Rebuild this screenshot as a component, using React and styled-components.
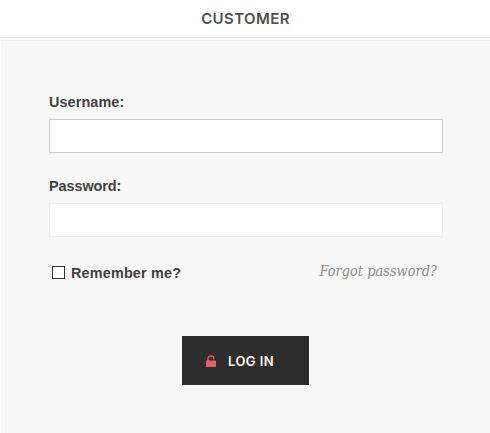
import React from "react";
import styled, { createGlobalStyle } from "styled-components";

const GlobalStyle = createGlobalStyle`
  *, *::before, *::after { box-sizing: border-box; }
  body { margin: 0; background: #fff; }
`;

const Page = styled.main`
  display: flex;
  flex-direction: column;
  height: 433px;
  font: 700 14.4px/16px "Liberation Sans", Arial, sans-serif;
  color: #414141;
`;

const Header = styled.header`
  display: flex;
  justify-content: center;
  height: 38px;
  margin-left: 1px;
  padding-top: 9px;
  border-bottom: 1px solid #eee;
`;

const Title = styled.h1`
  margin: 0;
  font: 600 15px/20px Inter, sans-serif;
  letter-spacing: 0.4px;
  color: #505050;
`;

const Panel = styled.form`
  flex: 1;
  display: flex;
  flex-direction: column;
  margin: 2px 0 0 1px;
  padding: 53px 47px 0 48px;
  border-top: 1px solid #eee;
  background: #f8f8f8;
`;

const Field = styled.label`
  display: flex;
  flex-direction: column;
  gap: 9px;
  margin-bottom: 25px;
  letter-spacing: ${(p) => p.$tracking};
`;

const Input = styled.input`
  height: 34px;
  padding: 0 10px;
  border: 1px solid ${(p) => (p.$active ? "#cccccc" : "#efefef")};
  border-radius: 0;
  background: #fff;
  font: inherit;
  outline: none;
`;

const Options = styled.div`
  display: flex;
  justify-content: space-between;
  height: 22px;
  padding: 0 6px 0 3px;
`;

const Remember = styled.label`
  display: flex;
  align-items: center;
  gap: 6px;
  letter-spacing: 0.18px;
`;

const Checkbox = styled.input`
  appearance: none;
  width: 13px;
  height: 13px;
  margin: 0 0 2px;
  border: 1px solid #333;
  background: #fff;
`;

const Forgot = styled.a`
  margin-top: -1px;
  font: italic 400 14.3px/20px "DejaVu Serif Condensed", "DejaVu Serif", serif;
  font-stretch: condensed;
  letter-spacing: 0.07px;
  color: #8c8c8c;
  text-decoration: none;
`;

const LoginButton = styled.button`
  display: flex;
  align-items: center;
  align-self: center;
  gap: 12px;
  width: 127px;
  height: 49px;
  margin: 52px 1px 0 0;
  padding: 1px 0 0 24px;
  border: 0;
  background: #2d2d2d;
  color: #fff;
  font: 600 13px/18px Inter, sans-serif;
  letter-spacing: 0.45px;
`;

const LockIcon = styled.svg`
  width: 10px;
  height: 13px;
  flex: none;
`;

export default function App() {
  return (
    <>
      <GlobalStyle />
      <Page>
        <Header>
          <Title>CUSTOMER</Title>
        </Header>
        <Panel onSubmit={(e) => e.preventDefault()}>
          <Field $tracking="0.1px">
            Username:
            <Input type="text" $active />
          </Field>
          <Field $tracking="-0.05px">
            Password:
            <Input type="password" />
          </Field>
          <Options>
            <Remember>
              <Checkbox type="checkbox" />
              Remember me?
            </Remember>
            <Forgot href="#">Forgot password?</Forgot>
          </Options>
          <LoginButton type="submit">
            <LockIcon viewBox="0 0 10 13" aria-hidden="true">
              <path d="M2 6V3.3a2.9 2.4 0 0 1 5.8 0V4.2" fill="none" stroke="#e86163" strokeWidth="1.3" />
              <rect y="5.5" width="10" height="6.5" rx="0.4" fill="#e86163" />
            </LockIcon>
            LOG IN
          </LoginButton>
        </Panel>
      </Page>
    </>
  );
}
